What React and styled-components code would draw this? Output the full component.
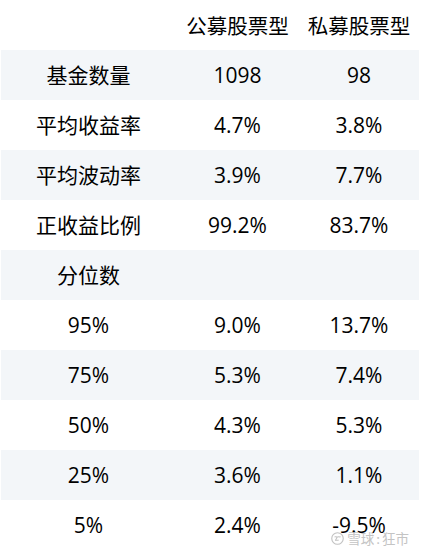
import styled, { createGlobalStyle } from 'styled-components';

const GlobalStyle = createGlobalStyle`
  html, body {
    margin: 0;
    padding: 0;
    background: #fff;
  }
`;

const header = ['', '公募股票型', '私募股票型'];

const rows = [
  ['基金数量', '1098', '98'],
  ['平均收益率', '4.7%', '3.8%'],
  ['平均波动率', '3.9%', '7.7%'],
  ['正收益比例', '99.2%', '83.7%'],
  ['分位数', '', ''],
  ['95%', '9.0%', '13.7%'],
  ['75%', '5.3%', '7.4%'],
  ['50%', '4.3%', '5.3%'],
  ['25%', '3.6%', '1.1%'],
  ['5%', '2.4%', '-9.5%'],
];

function App() {
  return (
    <Page>
      <GlobalStyle />
      <Table>
        <Row>
          {header.map((cell, i) => (
            <HeadCell key={i}>{cell}</HeadCell>
          ))}
        </Row>
        {rows.map((row, i) => (
          <Row key={i} $striped={i % 2 === 0}>
            {row.map((cell, j) => (
              <Cell key={j}>{cell}</Cell>
            ))}
          </Row>
        ))}
      </Table>
      <Watermark>
        <svg width="13" height="13" viewBox="0 0 14 14">
          <circle cx="7" cy="7" r="6.2" fill="none" stroke="#c2c2c2" strokeWidth="1.2" />
          <path
            d="M3.8 5.4 C5 4.2 5.8 6.2 7 5 L4.6 9.2 C5.8 8 6.8 9.8 8.2 8.4 M7.2 5.4 C8.4 4.2 9.2 6.2 10.4 5"
            fill="none"
            stroke="#c2c2c2"
            strokeWidth="1.1"
          />
        </svg>
        <span>
          雪球<Colon>:</Colon>狂市
        </span>
      </Watermark>
    </Page>
  );
}

const Page = styled.div`
  position: relative;
  width: 421px;
  height: 551px;
  font-family: 'Open Sans', 'Noto Sans CJK SC', sans-serif;
  color: #000;
`;

const Table = styled.div`
  display: flex;
  flex-direction: column;
  padding: 0 2px 0 1px;
`;

const Row = styled.div`
  display: grid;
  grid-template-columns: 175px 123px 1fr;
  height: 50px;
  align-items: center;
  background: ${(p) => (p.$striped ? '#f3f6f9' : '#fff')};
`;

const Cell = styled.div`
  text-align: center;
  font-size: 21px;
  line-height: 1;
`;

const HeadCell = styled(Cell)`
  font-family: 'Noto Sans CJK SC', sans-serif;
  font-size: 20.5px;
`;

const Watermark = styled.div`
  position: absolute;
  right: 12px;
  bottom: 6px;
  display: flex;
  align-items: center;
  gap: 3px;
  font-family: 'Noto Sans CJK SC', sans-serif;
  font-size: 13.5px;
  line-height: 1;
  color: #c4c4c4;
`;

const Colon = styled.span`
  margin: 0 2px;
`;

export default App;
